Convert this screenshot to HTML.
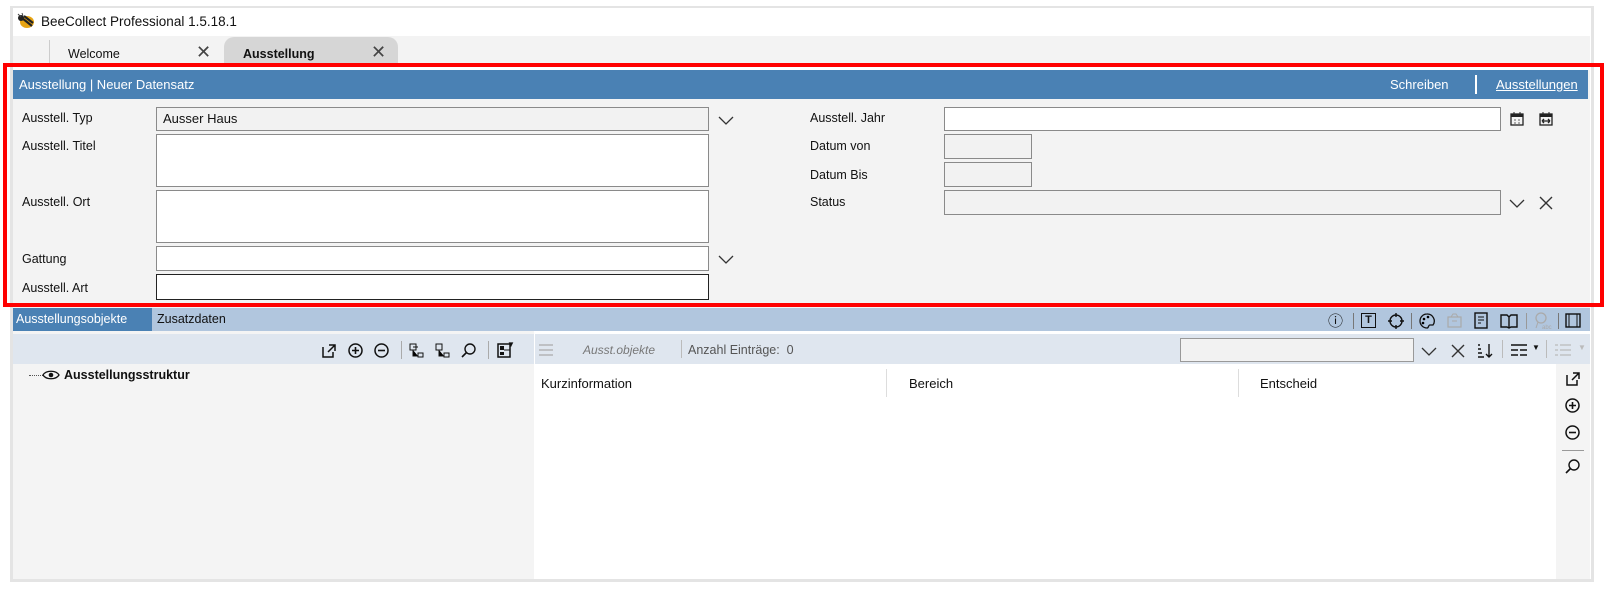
<!DOCTYPE html>
<html><head><meta charset="utf-8">
<style>
*{box-sizing:border-box;margin:0;padding:0}
body{width:1607px;height:589px;background:#fff;font-family:"Liberation Sans",sans-serif;font-size:13px;color:#111;position:relative;overflow:hidden}
.a{position:absolute}
.lbl{position:absolute;font-size:12.5px;color:#111}
.fld{position:absolute;border:1px solid #8a8a8a;background:#fff}
.fg{background:#f2f2f2}
svg.i{position:absolute}
</style></head><body>
<div class="a" style="left:10px;top:6px;width:1584px;height:576px;border:3px solid #e4e4e4;border-top-width:2px;background:#fff"></div>
<div class="a" style="left:13px;top:36px;width:1577px;height:28px;background:#f3f3f3"></div>
<div class="a" style="left:49px;top:40px;width:1px;height:24px;background:#ccc"></div>
<svg class="i" style="left:16px;top:12px" width="20" height="18" viewBox="0 0 20 18"><ellipse cx="11" cy="10" rx="7" ry="6" fill="#e7a413"/><path d="M6 6 L16 14 M8 4 L17 11" stroke="#222" stroke-width="2.2"/><circle cx="5" cy="6" r="3" fill="#222"/><path d="M2 2l3 3M6 1l1 3" stroke="#444"/></svg>
<div class="a" style="left:41px;top:14px;font-size:13.5px">BeeCollect Professional 1.5.18.1</div>
<div class="a" style="left:68px;top:47px;font-size:12.5px">Welcome</div>
<div class="a" style="left:196px;top:42px;font-size:18px;color:#444">✕</div>
<div class="a" style="left:224px;top:37px;width:174px;height:30px;background:#d6d6d6;border-radius:10px 10px 0 0"></div>
<div class="a" style="left:243px;top:47px;font-size:12.5px;font-weight:bold">Ausstellung</div>
<div class="a" style="left:371px;top:42px;font-size:18px;color:#444">✕</div>
<div class="a" style="left:13px;top:70px;width:1577px;height:238px;background:#f3f3f3"></div>
<div class="a" style="left:13px;top:70px;width:1575px;height:29px;background:#4a81b4"></div>
<div class="a" style="left:19px;top:77px;color:#fff;font-size:13px">Ausstellung | Neuer Datensatz</div>
<div class="a" style="left:1390px;top:77px;color:#fff;font-size:13px">Schreiben</div>
<div class="a" style="left:1475px;top:75px;width:2px;height:19px;background:#fff"></div>
<div class="a" style="left:1496px;top:77px;color:#fff;font-size:13px;text-decoration:underline">Ausstellungen</div>

<div class="lbl" style="left:22px;top:111px">Ausstell. Typ</div>
<div class="lbl" style="left:22px;top:139px">Ausstell. Titel</div>
<div class="lbl" style="left:22px;top:195px">Ausstell. Ort</div>
<div class="lbl" style="left:22px;top:252px">Gattung</div>
<div class="lbl" style="left:22px;top:281px">Ausstell. Art</div>
<div class="fld fg" style="left:156px;top:107px;width:553px;height:24px"></div>
<div class="a" style="left:163px;top:111px;font-size:13px">Ausser Haus</div>
<div class="fld" style="left:156px;top:134px;width:553px;height:53px"></div>
<div class="fld" style="left:156px;top:190px;width:553px;height:53px"></div>
<div class="fld" style="left:156px;top:246px;width:553px;height:25px"></div>
<div class="fld" style="left:156px;top:274px;width:553px;height:26px;border-color:#222"></div>
<svg class="i" style="left:717px;top:114px" width="18" height="12"><path d="M2 3l7 7 7-7" stroke="#333" fill="none" stroke-width="1.3"/></svg>
<svg class="i" style="left:717px;top:253px" width="18" height="12"><path d="M2 3l7 7 7-7" stroke="#333" fill="none" stroke-width="1.3"/></svg>

<div class="lbl" style="left:810px;top:111px">Ausstell. Jahr</div>
<div class="lbl" style="left:810px;top:139px">Datum von</div>
<div class="lbl" style="left:810px;top:168px">Datum Bis</div>
<div class="lbl" style="left:810px;top:195px">Status</div>
<div class="fld" style="left:944px;top:107px;width:557px;height:24px"></div>
<div class="fld fg" style="left:944px;top:134px;width:88px;height:25px"></div>
<div class="fld fg" style="left:944px;top:162px;width:88px;height:25px"></div>
<div class="fld fg" style="left:944px;top:190px;width:557px;height:25px"></div>
<svg class="i" style="left:1509px;top:111px" width="16" height="16"><rect x="2" y="3" width="12" height="11" fill="none" stroke="#222" stroke-width="1.3"/><rect x="2" y="3" width="12" height="3" fill="#222"/><path d="M5 1v3M11 1v3" stroke="#222"/><path d="M5 9h2M9 9h2M5 12h2M9 12h2" stroke="#666"/></svg>
<svg class="i" style="left:1538px;top:111px" width="16" height="16"><rect x="2" y="3" width="12" height="11" fill="none" stroke="#222" stroke-width="1.3"/><rect x="2" y="3" width="12" height="3" fill="#222"/><path d="M5 1v3M11 1v3" stroke="#222"/><path d="M4 10h8M4 10l2-2M4 10l2 2M12 10l-2-2M12 10l-2 2" stroke="#222" stroke-width="1.3"/></svg>
<svg class="i" style="left:1508px;top:197px" width="18" height="12"><path d="M2 3l7 7 7-7" stroke="#333" fill="none" stroke-width="1.3"/></svg>
<svg class="i" style="left:1538px;top:195px" width="16" height="16"><path d="M2 2l12 12M14 2L2 14" stroke="#333" stroke-width="1.4"/></svg>

<div class="a" style="left:3px;top:63px;width:1601px;height:244px;border:4px solid #f00"></div>

<div class="a" style="left:13px;top:308px;width:1577px;height:23px;background:#b1c6de"></div>
<div class="a" style="left:13px;top:308px;width:139px;height:23px;background:#4a81b4"></div>
<div class="a" style="left:16px;top:312px;color:#fff;font-size:12.5px">Ausstellungsobjekte</div>
<div class="a" style="left:157px;top:312px;font-size:12.5px">Zusatzdaten</div>
<div class="a" style="left:1328px;top:310px;font-size:15px">ⓘ</div>
<div class="a" style="left:1353px;top:313px;width:1px;height:16px;background:#777"></div>
<div class="a" style="left:1361px;top:313px;width:15px;height:15px;border:1.5px solid #111;font-size:11px;font-weight:bold;text-align:center;line-height:12px">T</div>
<svg class="i" style="left:1387px;top:312px" width="18" height="18"><circle cx="9" cy="9" r="6" fill="none" stroke="#111" stroke-width="1.4"/><path d="M9 1v4M9 13v4M1 9h4M13 9h4" stroke="#111" stroke-width="1.4"/></svg>
<div class="a" style="left:1411px;top:313px;width:1px;height:16px;background:#777"></div>
<svg class="i" style="left:1418px;top:312px" width="18" height="18"><path d="M9 2a7 7 0 1 0 0 14c2 0 1-3 3-3h3a7 7 0 0 0-6-11z" fill="none" stroke="#111" stroke-width="1.3"/><circle cx="6" cy="7" r="1.3"/><circle cx="10" cy="5" r="1.3"/><circle cx="5" cy="11" r="1.3"/></svg>
<svg class="i" style="left:1446px;top:313px" width="17" height="16"><rect x="2" y="4" width="13" height="10" fill="none" stroke="#aaa" stroke-width="1.2"/><path d="M5 4l2-3h3l2 3M6 8h5" stroke="#aaa" fill="none"/></svg>
<svg class="i" style="left:1473px;top:312px" width="16" height="17"><rect x="2" y="1" width="12" height="15" fill="none" stroke="#111" stroke-width="1.4"/><path d="M5 5h6M5 8h6M5 11h3" stroke="#111"/></svg>
<svg class="i" style="left:1499px;top:312px" width="20" height="17"><path d="M2 3h6l2 2 2-2h6v12h-6l-2 1-2-1H2z M10 5v11" fill="none" stroke="#111" stroke-width="1.4"/></svg>
<div class="a" style="left:1526px;top:313px;width:1px;height:16px;background:#999"></div>
<svg class="i" style="left:1533px;top:311px" width="20" height="19"><circle cx="8" cy="7" r="5" fill="none" stroke="#aaa" stroke-width="1.3"/><path d="M5 11l-2 6" stroke="#aaa"/><text x="9" y="18" font-size="6" fill="#aaa" font-family="Liberation Sans">abc</text></svg>
<div class="a" style="left:1558px;top:313px;width:1px;height:16px;background:#777"></div>
<svg class="i" style="left:1564px;top:312px" width="18" height="17"><rect x="2" y="2" width="14" height="13" fill="none" stroke="#111" stroke-width="1.4"/><path d="M5 2v13M13 2v13" stroke="#111"/></svg>

<div class="a" style="left:13px;top:331px;width:521px;height:248px;background:#f4f4f4"></div>
<div class="a" style="left:13px;top:334px;width:521px;height:30px;background:#dfe6ef"></div>
<div class="a" style="left:535px;top:334px;width:1055px;height:30px;background:#dfe6ef"></div>
<div class="a" style="left:1556px;top:364px;width:34px;height:215px;background:#f4f4f4"></div>
<svg class="i" style="left:321px;top:343px" width="16" height="16"><path d="M2 4v10h10V9M8 2h6v6M14 2L7 9" fill="none" stroke="#111" stroke-width="1.5"/></svg>
<svg class="i" style="left:347px;top:342px" width="17" height="17"><circle cx="8.5" cy="8.5" r="6.5" fill="none" stroke="#111" stroke-width="1.5"/><path d="M8.5 5v7M5 8.5h7" stroke="#111" stroke-width="1.6"/></svg>
<svg class="i" style="left:373px;top:342px" width="17" height="17"><circle cx="8.5" cy="8.5" r="6.5" fill="none" stroke="#111" stroke-width="1.5"/><path d="M5 8.5h7" stroke="#111" stroke-width="1.6"/></svg>
<div class="a" style="left:401px;top:341px;width:1px;height:18px;background:#aaa"></div>
<svg class="i" style="left:408px;top:342px" width="17" height="17"><rect x="2" y="2" width="6" height="6" fill="none" stroke="#111"/><path d="M5 8v6h5M5 5h5" stroke="#111"/><rect x="10" y="11" width="5" height="4" fill="none" stroke="#111"/></svg>
<svg class="i" style="left:434px;top:342px" width="17" height="17"><rect x="2" y="2" width="6" height="6" fill="none" stroke="#111"/><path d="M5 8v6h5" stroke="#111"/><rect x="10" y="11" width="5" height="4" fill="none" stroke="#111"/></svg>
<svg class="i" style="left:460px;top:342px" width="17" height="17"><circle cx="10" cy="7" r="5" fill="none" stroke="#111" stroke-width="1.4"/><path d="M6.5 10.5L2 15" stroke="#111" stroke-width="1.6"/></svg>
<div class="a" style="left:488px;top:341px;width:1px;height:18px;background:#aaa"></div>
<svg class="i" style="left:496px;top:342px" width="16" height="17"><rect x="2" y="2" width="12" height="13" fill="none" stroke="#111" stroke-width="1.5"/><rect x="4" y="4" width="4" height="4" fill="#111"/><rect x="4" y="10" width="4" height="3" fill="#111"/><path d="M8 8h6" stroke="#111"/></svg>
<div class="a" style="left:507px;top:340px;font-size:8px">▼</div>
<svg class="i" style="left:538px;top:343px" width="16" height="14"><path d="M1 2h14M1 7h14M1 12h14" stroke="#aaa" stroke-width="1.2"/></svg>
<div class="a" style="left:583px;top:343px;font-size:12px;font-style:italic;color:#777">Ausst.objekte</div>
<div class="a" style="left:681px;top:340px;width:1px;height:18px;background:#bbb"></div>
<div class="a" style="left:688px;top:343px;font-size:12.5px;color:#555">Anzahl Einträge:&nbsp; 0</div>
<div class="fld fg" style="left:1180px;top:338px;width:234px;height:24px;border-color:#999"></div>
<svg class="i" style="left:1420px;top:345px" width="18" height="12"><path d="M2 3l7 7 7-7" stroke="#333" fill="none" stroke-width="1.3"/></svg>
<svg class="i" style="left:1450px;top:343px" width="16" height="16"><path d="M2 2l12 12M14 2L2 14" stroke="#333" stroke-width="1.4"/></svg>
<svg class="i" style="left:1476px;top:342px" width="18" height="18"><path d="M2 3h2M2 7h3M2 11h4M2 15h6M13 2v13M10 12l3 3 3-3" stroke="#111" stroke-width="1.4" fill="none"/></svg>
<div class="a" style="left:1502px;top:340px;width:1px;height:18px;background:#bbb"></div>
<svg class="i" style="left:1510px;top:343px" width="18" height="14"><path d="M1 2h16M1 7h7M10 7h7M1 12h7M10 12h7" stroke="#111" stroke-width="1.4"/></svg>
<div class="a" style="left:1532px;top:343px;font-size:8px">▼</div>
<div class="a" style="left:1546px;top:340px;width:1px;height:18px;background:#bbb"></div>
<svg class="i" style="left:1554px;top:343px" width="18" height="14"><path d="M1 2h3M6 2h11M1 7h3M6 7h11M1 12h3M6 12h11" stroke="#bbb" stroke-width="1.3"/></svg>
<div class="a" style="left:1578px;top:343px;font-size:8px;color:#bbb">▼</div>

<div class="a" style="left:29px;top:375px;width:14px;border-top:1px dotted #555"></div>
<svg class="i" style="left:42px;top:369px" width="18" height="12"><path d="M1 6c3-5 13-5 16 0c-3 5-13 5-16 0z" fill="none" stroke="#111" stroke-width="1.3"/><circle cx="9" cy="6" r="2.3" fill="#111"/></svg>
<div class="a" style="left:64px;top:368px;font-size:12.5px;font-weight:bold">Ausstellungsstruktur</div>

<div class="a" style="left:541px;top:376px;font-size:13px">Kurzinformation</div>
<div class="a" style="left:886px;top:369px;width:1px;height:28px;background:#ddd"></div>
<div class="a" style="left:909px;top:376px;font-size:13px">Bereich</div>
<div class="a" style="left:1238px;top:369px;width:1px;height:28px;background:#ddd"></div>
<div class="a" style="left:1260px;top:376px;font-size:13px">Entscheid</div>
<svg class="i" style="left:1565px;top:371px" width="16" height="16"><path d="M2 4v10h10V9M8 2h6v6M14 2L7 9" fill="none" stroke="#111" stroke-width="1.5"/></svg>
<svg class="i" style="left:1564px;top:397px" width="17" height="17"><circle cx="8.5" cy="8.5" r="6.5" fill="none" stroke="#111" stroke-width="1.5"/><path d="M8.5 5v7M5 8.5h7" stroke="#111" stroke-width="1.6"/></svg>
<svg class="i" style="left:1564px;top:424px" width="17" height="17"><circle cx="8.5" cy="8.5" r="6.5" fill="none" stroke="#111" stroke-width="1.5"/><path d="M5 8.5h7" stroke="#111" stroke-width="1.6"/></svg>
<div class="a" style="left:1562px;top:450px;width:22px;height:1px;background:#999"></div>
<svg class="i" style="left:1564px;top:458px" width="17" height="17"><circle cx="10" cy="7" r="5" fill="none" stroke="#111" stroke-width="1.4"/><path d="M6.5 10.5L2 15" stroke="#111" stroke-width="1.6"/></svg>
</body></html>
